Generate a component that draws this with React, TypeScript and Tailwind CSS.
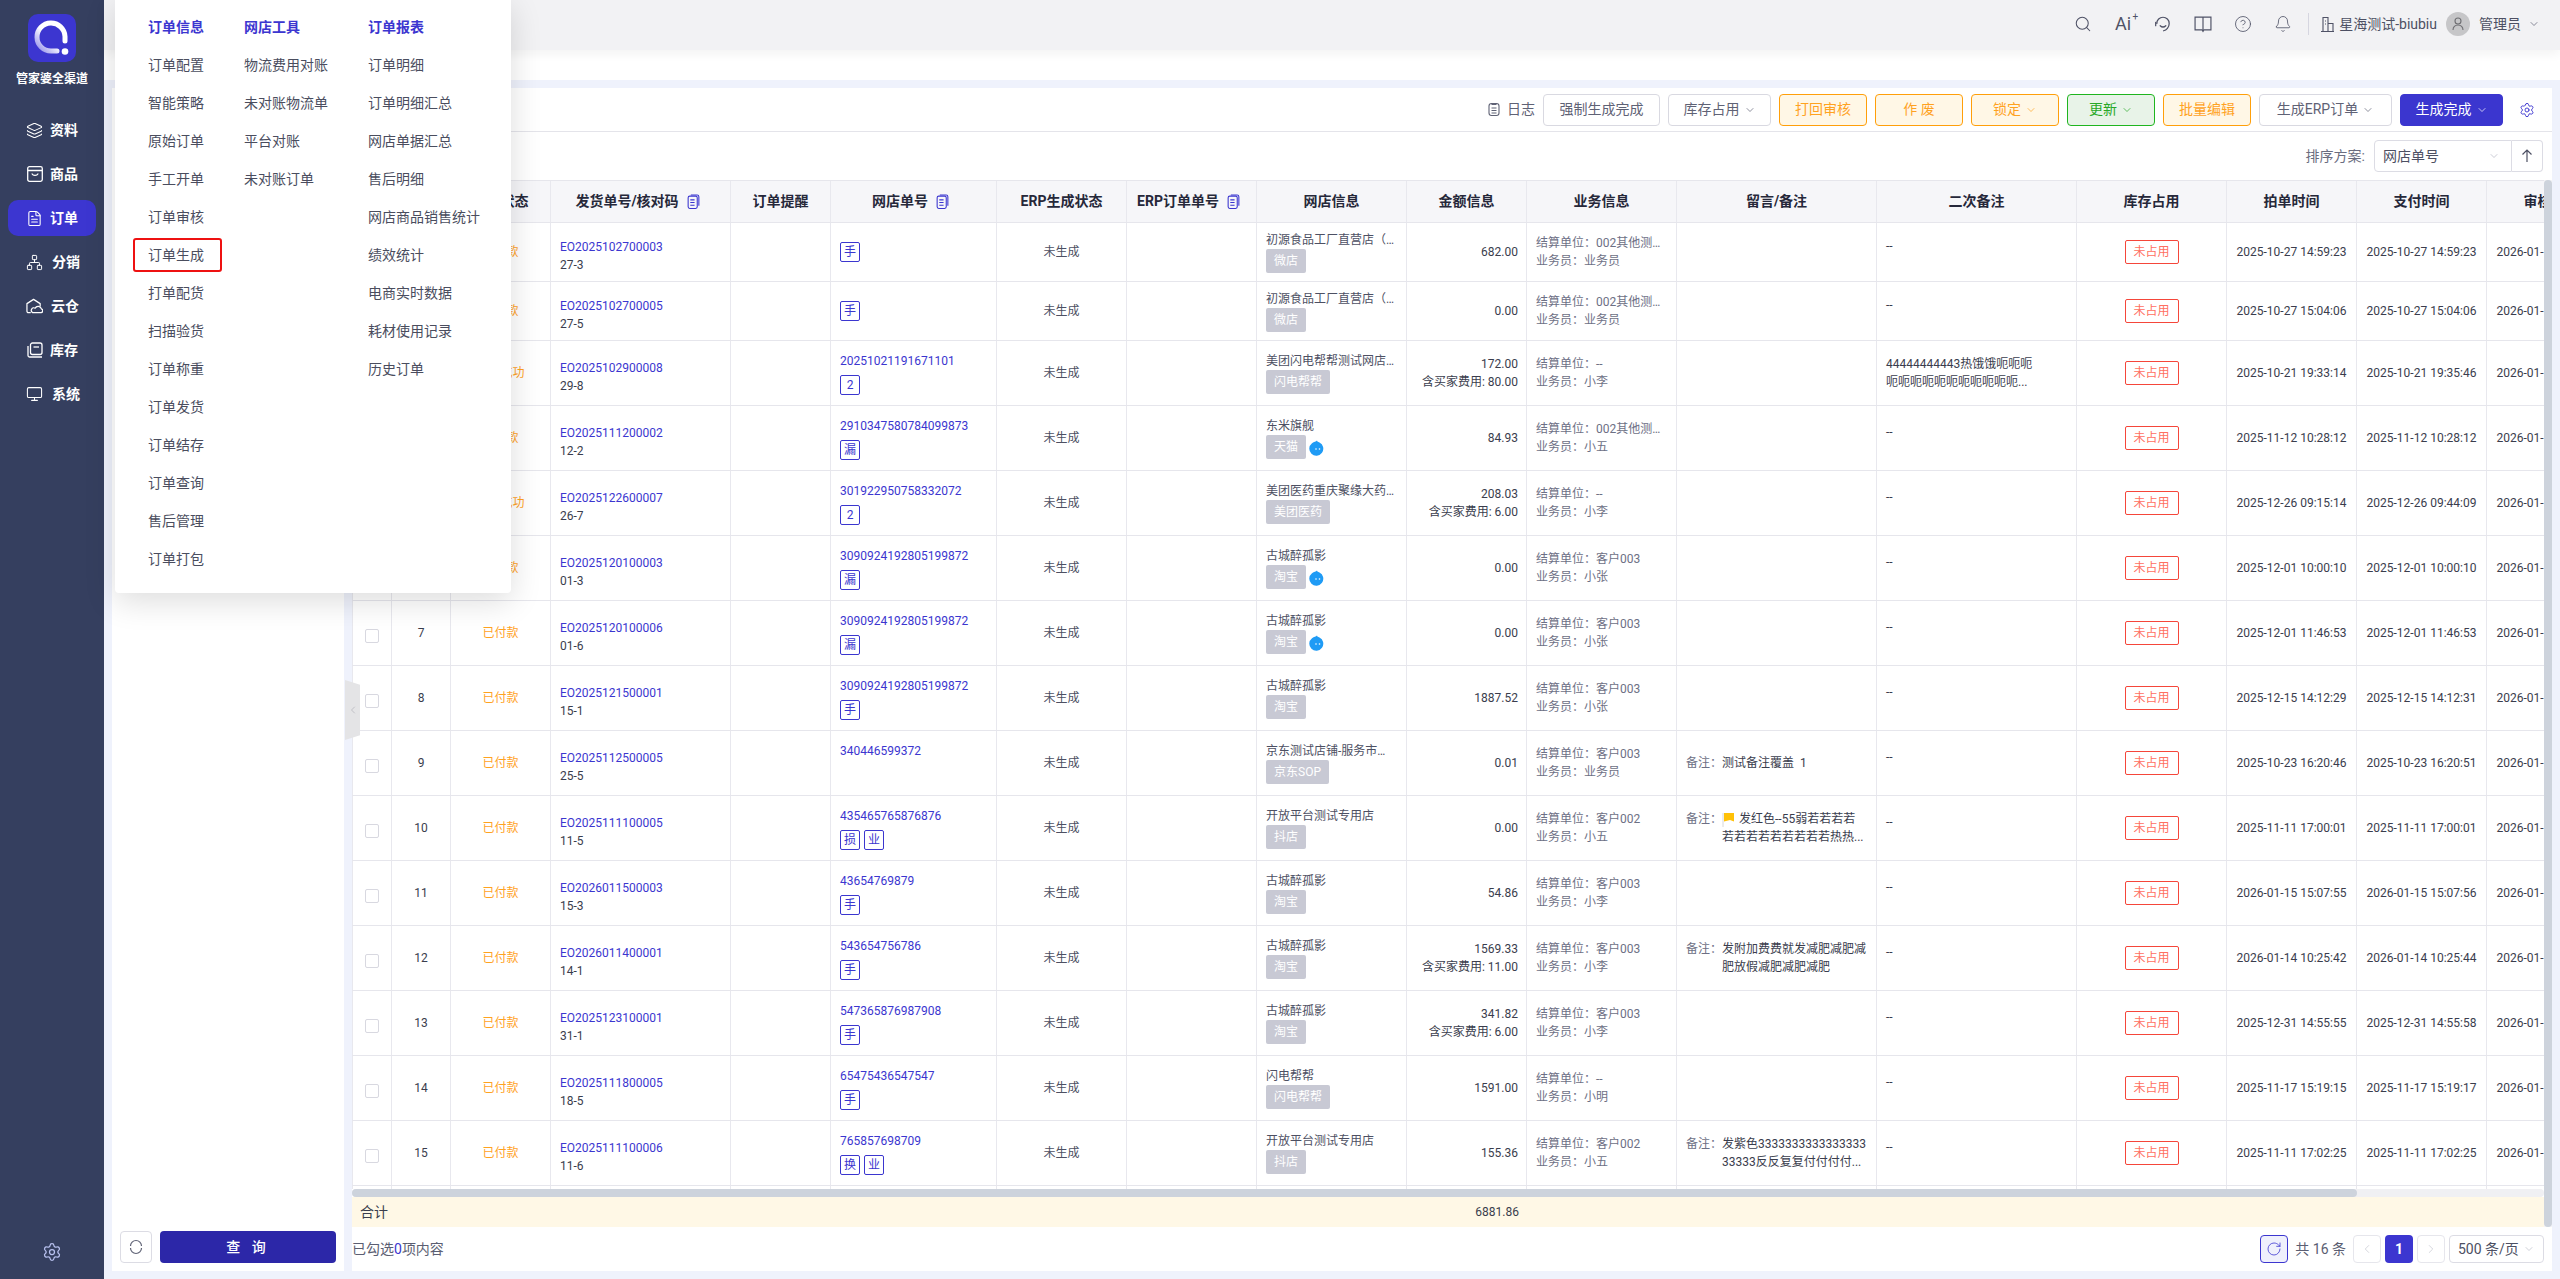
import { Bell, ChevronDown, ChevronLeft, ChevronRight, CircleHelp, FileText, Layers, Monitor, Network, RotateCw, Search, Settings } from 'lucide-react';

const GRID = 'grid grid-cols-[40px_59px_100px_180px_100px_166px_130px_130px_150px_120px_150px_200px_200px_150px_130px_130px_130px] w-[2265px]';

type Order = {
  no: string;
  code: string;
  status?: string;
  shopNo?: string;
  tags: string[];
  shop: string;
  platform: string;
  badge?: boolean;
  amount: string;
  fee?: string;
  unit: string;
  clerk: string;
  remark?: string[];
  flag?: boolean;
  second?: string[];
  created: string;
  paid: string;
};

const orders: Order[] = [
  { no: 'EO2025102700003', code: '27-3', tags: ['手'], shop: '初源食品工厂直营店（旗舰店）', platform: '微店', amount: '682.00', unit: '002其他测试单位', clerk: '业务员', created: '2025-10-27 14:59:23', paid: '2025-10-27 14:59:23' },
  { no: 'EO2025102700005', code: '27-5', tags: ['手'], shop: '初源食品工厂直营店（旗舰店）', platform: '微店', amount: '0.00', unit: '002其他测试单位', clerk: '业务员', created: '2025-10-27 15:04:06', paid: '2025-10-27 15:04:06' },
  { no: 'EO2025102900008', code: '29-8', status: '付款成功', shopNo: '20251021191671101', tags: ['2'], shop: '美团闪电帮帮测试网店铺名', platform: '闪电帮帮', amount: '172.00', fee: '含买家费用: 80.00', unit: '--', clerk: '小李', second: ['44444444443热饿饿呃呃呃', '呃呃呃呃呃呃呃呃呃呃呃...'], created: '2025-10-21 19:33:14', paid: '2025-10-21 19:35:46' },
  { no: 'EO2025111200002', code: '12-2', shopNo: '2910347580784099873', tags: ['漏'], shop: '东米旗舰', platform: '天猫', badge: true, amount: '84.93', unit: '002其他测试单位', clerk: '小五', created: '2025-11-12 10:28:12', paid: '2025-11-12 10:28:12' },
  { no: 'EO2025122600007', code: '26-7', status: '付款成功', shopNo: '301922950758332072', tags: ['2'], shop: '美团医药重庆聚缘大药房店', platform: '美团医药', amount: '208.03', fee: '含买家费用: 6.00', unit: '--', clerk: '小李', created: '2025-12-26 09:15:14', paid: '2025-12-26 09:44:09' },
  { no: 'EO2025120100003', code: '01-3', shopNo: '3090924192805199872', tags: ['漏'], shop: '古城醉孤影', platform: '淘宝', badge: true, amount: '0.00', unit: '客户003', clerk: '小张', created: '2025-12-01 10:00:10', paid: '2025-12-01 10:00:10' },
  { no: 'EO2025120100006', code: '01-6', shopNo: '3090924192805199872', tags: ['漏'], shop: '古城醉孤影', platform: '淘宝', badge: true, amount: '0.00', unit: '客户003', clerk: '小张', created: '2025-12-01 11:46:53', paid: '2025-12-01 11:46:53' },
  { no: 'EO2025121500001', code: '15-1', shopNo: '3090924192805199872', tags: ['手'], shop: '古城醉孤影', platform: '淘宝', amount: '1887.52', unit: '客户003', clerk: '小张', created: '2025-12-15 14:12:29', paid: '2025-12-15 14:12:31' },
  { no: 'EO2025112500005', code: '25-5', shopNo: '340446599372', tags: [], shop: '京东测试店铺-服务市场测试', platform: '京东SOP', amount: '0.01', unit: '客户003', clerk: '业务员', remark: ['测试备注覆盖  1'], created: '2025-10-23 16:20:46', paid: '2025-10-23 16:20:51' },
  { no: 'EO2025111100005', code: '11-5', shopNo: '435465765876876', tags: ['损', '业'], shop: '开放平台测试专用店', platform: '抖店', amount: '0.00', unit: '客户002', clerk: '小五', remark: ['发红色--55弱若若若若', '若若若若若若若若若热热...'], flag: true, created: '2025-11-11 17:00:01', paid: '2025-11-11 17:00:01' },
  { no: 'EO2026011500003', code: '15-3', shopNo: '43654769879', tags: ['手'], shop: '古城醉孤影', platform: '淘宝', amount: '54.86', unit: '客户003', clerk: '小李', created: '2026-01-15 15:07:55', paid: '2026-01-15 15:07:56' },
  { no: 'EO2026011400001', code: '14-1', shopNo: '543654756786', tags: ['手'], shop: '古城醉孤影', platform: '淘宝', amount: '1569.33', fee: '含买家费用: 11.00', unit: '客户003', clerk: '小李', remark: ['发附加费费就发减肥减肥减', '肥放假减肥减肥减肥'], created: '2026-01-14 10:25:42', paid: '2026-01-14 10:25:44' },
  { no: 'EO2025123100001', code: '31-1', shopNo: '547365876987908', tags: ['手'], shop: '古城醉孤影', platform: '淘宝', amount: '341.82', fee: '含买家费用: 6.00', unit: '客户003', clerk: '小李', created: '2025-12-31 14:55:55', paid: '2025-12-31 14:55:58' },
  { no: 'EO2025111800005', code: '18-5', shopNo: '65475436547547', tags: ['手'], shop: '闪电帮帮', platform: '闪电帮帮', amount: '1591.00', unit: '--', clerk: '小明', created: '2025-11-17 15:19:15', paid: '2025-11-17 15:19:17' },
  { no: 'EO2025111100006', code: '11-6', shopNo: '765857698709', tags: ['换', '业'], shop: '开放平台测试专用店', platform: '抖店', amount: '155.36', unit: '客户002', clerk: '小五', remark: ['发紫色3333333333333333', '33333反反复复付付付付...'], created: '2025-11-11 17:02:25', paid: '2025-11-11 17:02:25' },
];

const menuColumns = [
  { title: '订单信息', width: 'w-[96px]', items: ['订单配置', '智能策略', '原始订单', '手工开单', '订单审核', '订单生成', '打单配货', '扫描验货', '订单称重', '订单发货', '订单结存', '订单查询', '售后管理', '订单打包'] },
  { title: '网店工具', width: 'w-[124px]', items: ['物流费用对账', '未对账物流单', '平台对账', '未对账订单'] },
  { title: '订单报表', width: 'w-[130px]', items: ['订单明细', '订单明细汇总', '网店单据汇总', '售后明细', '网店商品销售统计', '绩效统计', '电商实时数据', '耗材使用记录', '历史订单'] },
];

const tools = [
  { label: '强制生成完成', width: 'w-[117px]', tone: 'plain' },
  { label: '库存占用', width: 'w-[103px]', tone: 'plain', arrow: true },
  { label: '打回审核', width: 'w-[88px]', tone: 'amber' },
  { label: '作 废', width: 'w-[88px]', tone: 'amber' },
  { label: '锁定', width: 'w-[88px]', tone: 'amber', arrow: true },
  { label: '更新', width: 'w-[88px]', tone: 'green', arrow: true },
  { label: '批量编辑', width: 'w-[88px]', tone: 'amber' },
  { label: '生成ERP订单', width: 'w-[133px]', tone: 'plain', arrow: true },
  { label: '生成完成', width: 'w-[103px]', tone: 'primary', arrow: true },
];

const toneClass: Record<string, string> = {
  plain: 'border-[#d9d9e1] bg-white text-[#5f6275]',
  amber: 'border-[#ff9f0a] bg-[#fff7e6] text-[#ffa21f]',
  green: 'border-[#1fb51f] bg-[#e8f3e8] text-[#27a827]',
  primary: 'border-[#3b36cf] bg-[#3b36cf] text-white',
};

function CopyIcon() {
  return (
    <svg width="13" height="15" viewBox="0 0 12 14" fill="none" stroke="#3b36cf" strokeWidth="1" className="ml-2 shrink-0">
      <rect x="1" y="2" width="8.5" height="11.5" rx="1.5" />
      <path d="M3.5 1h6A1.5 1.5 0 0 1 11 2.500V11M3 5.500h4M3 8h4M3 10.500h4" />
    </svg>
  );
}

function StoreIcon() {
  return (
    <svg width="16" height="16" viewBox="0 0 16 16" fill="none" stroke="currentColor" strokeWidth="1.3">
      <rect x="0.700" y="0.700" width="14.600" height="14.600" rx="1.800" />
      <path d="M1 4.500h14M5 7.500c.5 2.600 5.500 2.600 6 0" />
    </svg>
  );
}

function CloudHouseIcon() {
  return (
    <svg width="18" height="16" viewBox="0 0 18 16" fill="none" stroke="currentColor" strokeWidth="1.3" strokeLinejoin="round">
      <path d="M5 15H2.500A1.500 1.500 0 0 1 1 13.500V5.500L8 1l7 4.500v3" />
      <path d="M7 15h9a2 2 0 0 0 .3-3.900 3.500 3.500 0 0 0-6.600-.8A2.400 2.400 0 0 0 7 15z" />
    </svg>
  );
}

function StockIcon() {
  return (
    <svg width="16" height="16" viewBox="0 0 16 16" fill="none" stroke="currentColor" strokeWidth="1.3">
      <path d="M1 4v9.500A1.500 1.500 0 0 0 2.500 15H15" />
      <rect x="3.500" y="1" width="11.500" height="11.500" rx="2" />
      <path d="M6.500 5h5.500" />
    </svg>
  );
}

const navItems = [
  { label: '资料', icon: <Layers size={17} strokeWidth={1.5} />, labelClass: '' },
  { label: '商品', icon: <StoreIcon />, labelClass: '' },
  { label: '订单', icon: <FileText size={17} strokeWidth={1.5} />, labelClass: '', active: true },
  { label: '分销', icon: <Network size={19} strokeWidth={1.4} />, labelClass: 'ml-[2px]' },
  { label: '云仓', icon: <CloudHouseIcon />, labelClass: 'ml-px' },
  { label: '库存', icon: <StockIcon />, labelClass: '' },
  { label: '系统', icon: <Monitor size={18} strokeWidth={1.5} />, labelClass: 'ml-[2px]' },
];

function Sidebar() {
  return (
    <aside className="flex h-full w-[104px] shrink-0 flex-col items-center bg-[#353f5f] pt-[14px]">
      <div className="flex h-12 w-12 items-center justify-center rounded-[10px] bg-[#3c36d0]">
        <svg width="48" height="48" viewBox="0 0 48 48" fill="none">
          <defs>
            <linearGradient id="logoArc" x1="8" y1="36" x2="30" y2="14" gradientUnits="userSpaceOnUse">
              <stop stopColor="#8f8bea" />
              <stop offset="0.6" stopColor="#ffffff" />
            </linearGradient>
          </defs>
          <path d="M37 27v-4.500a14 14 0 1 0-14 14.500h6" stroke="url(#logoArc)" strokeWidth="5" strokeLinecap="round" />
          <circle cx="37" cy="37.500" r="3.300" fill="#fff" />
        </svg>
      </div>
      <div className="mt-2 text-[12px] leading-[18px] font-bold text-white">管家婆全渠道</div>
      <nav className="mt-6 flex w-full flex-col gap-2 px-2">
        {navItems.map((item) => (
          <div
            key={item.label}
            className={`flex h-9 items-center gap-[7px] rounded-[10px] pl-[18px] text-[14px] font-bold text-white ${item.active ? 'bg-[#3c36d0]' : ''}`}
          >
            <span className="flex w-[17px] justify-center">{item.icon}</span>
            <span className={item.labelClass}>{item.label}</span>
          </div>
        ))}
      </nav>
      <Settings size={20} strokeWidth={1.5} className="mt-auto mb-[17px] text-[#b9c2f0]" />
    </aside>
  );
}

function TopIcon({ children }: { children: React.ReactNode }) {
  return <span className="flex w-10 justify-center">{children}</span>;
}

function TopBar() {
  return (
    <header className="relative z-10 flex h-[50px] shrink-0 items-center justify-end bg-[#f2f2f4] pr-[20px] pb-[2px] text-[#4f5266] shadow-[0_4px_10px_rgba(0,0,0,0.05)]">
      <TopIcon>
        <Search size={18} strokeWidth={1.4} />
      </TopIcon>
      <TopIcon>
        <span className="relative text-[18px] leading-none">
          Ai
          <span className="absolute -top-[3px] -right-[7px] text-[10px] leading-none">+</span>
        </span>
      </TopIcon>
      <TopIcon>
        <svg width="18" height="18" viewBox="0 0 16 16" fill="none" stroke="currentColor" strokeWidth="1.1" strokeLinecap="round">
          <path d="M2.500 7.500a5.500 5.500 0 0 1 11 0c0 3.500-2.500 6-5 6.500" />
          <path d="M1.500 6.500v3M5.500 9.500c1.500 1.500 3.500 1.500 5 0" />
        </svg>
      </TopIcon>
      <TopIcon>
        <svg width="18" height="17" viewBox="0 0 17 16" fill="none" stroke="currentColor" strokeWidth="1.1">
          <path d="M1 1h15v12H9.500l-1 1.500-1-1.500H1zM8.500 1v12" />
        </svg>
      </TopIcon>
      <TopIcon>
        <CircleHelp size={18} strokeWidth={1.1} />
      </TopIcon>
      <TopIcon>
        <Bell size={18} strokeWidth={1.1} />
      </TopIcon>
      <span className="mr-[11px] ml-[5px] h-[22px] w-px bg-[#d6d6e0]" />
      <svg width="14" height="17" viewBox="0 0 14 16" fill="none" stroke="currentColor" strokeWidth="1.1" className="mr-[5px]">
        <path d="M3 15V1h5v14M8 7h5v8M1 15h13M5 4.500h1M5 7.500h1" />
      </svg>
      <span className="text-[14px] text-[#4d5063]">星海测试-biubiu</span>
      <span className="mx-[9px] flex h-6 w-6 items-center justify-center rounded-full bg-[#c6c6c8]">
        <svg width="12" height="14" viewBox="0 0 12 14" fill="none" stroke="#6e6e72" strokeWidth="1.1">
          <circle cx="6" cy="4" r="3" />
          <path d="M1 13c0-3 2-5 5-5s5 2 5 5" />
        </svg>
      </span>
      <span className="text-[14px] text-[#4d5063]">管理员</span>
      <ChevronDown size={12} strokeWidth={1.3} className="ml-[7px]" />
    </header>
  );
}

function MegaMenu() {
  return (
    <div className="absolute top-0 left-[115px] z-20 flex h-[593px] w-[396px] rounded-b-[4px] bg-white pt-2 pl-[33px] shadow-[0_8px_32px_rgba(0,0,0,0.14)]">
      {menuColumns.map((col) => (
        <div key={col.title} className={col.width}>
          <div className="h-[38px] text-[14px] leading-[38px] font-bold text-[#3c36d0]">{col.title}</div>
          {col.items.map((item) => (
            <div key={item} className="relative h-[38px] whitespace-nowrap text-[14px] leading-[38px] text-[#4a4d5e]">
              {item}
              {item === '订单生成' && (
                <span className="absolute top-[2px] -left-[15px] h-[34px] w-[89px] rounded-[3px] border-2 border-[#ee1111]" />
              )}
            </div>
          ))}
        </div>
      ))}
    </div>
  );
}

function Toolbar() {
  return (
    <div className="flex h-[44px] shrink-0 items-center justify-end border-b border-[#e4e4ea] pr-[17px] text-[14px]">
      <svg width="12" height="15" viewBox="0 0 12 15" fill="none" stroke="#5f6275" strokeWidth="1.100" className="mr-[7px]">
        <rect x="1" y="1.500" width="10" height="12" rx="2.500" />
        <path d="M4 1v1.500h4V1M3.500 6h5M3.500 8.500h5M3.500 11h5" />
      </svg>
      <span className="mr-2 text-[#5f6275]">日志</span>
      <div className="flex gap-2">
        {tools.map((tool) => (
          <div
            key={tool.label}
            className={`flex h-8 items-center justify-center gap-1 rounded-[4px] border ${tool.width} ${toneClass[tool.tone]}`}
          >
            {tool.label}
            {tool.arrow && <ChevronDown size={12} strokeWidth={1.4} />}
          </div>
        ))}
      </div>
      <Settings size={16} strokeWidth={1.4} className="ml-4 text-[#3c36d0]" />
    </div>
  );
}

function SortRow() {
  return (
    <div className="flex h-[48px] shrink-0 justify-end pt-2 pr-[9px] text-[14px]">
      <span className="mr-[9px] leading-[32px] text-[#6a6d80]">排序方案:</span>
      <div className="flex h-8 w-[138px] items-center justify-between rounded-l-[4px] border border-[#dcdce4] pr-[11px] pl-2 text-[#4d5063]">
        网店单号
        <ChevronDown size={12} strokeWidth={1.3} className="text-[#b0b2bf]" />
      </div>
      <div className="flex h-8 w-[31px] items-center justify-center rounded-r-[4px] border border-l-0 border-[#dcdce4] text-[#4d5063]">
        <svg width="12" height="14" viewBox="0 0 12 14" fill="none" stroke="currentColor" strokeWidth="1.200">
          <path d="M6 13V1M1.500 5.500 6 1l4.500 4.500" />
        </svg>
      </div>
    </div>
  );
}

function HeadCell({ label, copy, className }: { label?: string; copy?: boolean; className?: string }) {
  return (
    <div className={`flex items-center justify-center border-r border-[#e8e8ee] text-[14px] font-bold whitespace-nowrap text-[#26283a] ${copy ? 'pr-[6px]' : ''} ${className ?? ''}`}>
      {label}
      {copy && <CopyIcon />}
    </div>
  );
}

function TableHead() {
  return (
    <div className={`${GRID} h-[43px] border-y border-[#e6e6ec] bg-[#f6f6f9]`}>
      <HeadCell className="border-l" />
      <HeadCell />
      <HeadCell label="订单状态" />
      <HeadCell label="发货单号/核对码" copy />
      <HeadCell label="订单提醒" />
      <HeadCell label="网店单号" copy />
      <HeadCell label="ERP生成状态" />
      <HeadCell label="ERP订单单号" copy />
      <HeadCell label="网店信息" />
      <HeadCell label="金额信息" />
      <HeadCell label="业务信息" />
      <HeadCell label="留言/备注" />
      <HeadCell label="二次备注" />
      <HeadCell label="库存占用" />
      <HeadCell label="拍单时间" />
      <HeadCell label="支付时间" />
      <HeadCell label="审核时间" />
    </div>
  );
}

function ShopTag({ text }: { text: string }) {
  return (
    <span className="flex h-5 w-5 items-center justify-center rounded-[2px] border border-[#3b36cf] text-[12px] text-[#3b36cf]">
      {text}
    </span>
  );
}

function DropBadge() {
  return (
    <svg width="16" height="16" viewBox="0 0 16 16" className="mb-[3px] ml-[3px] shrink-0">
      <path d="M8 0.500c.3 1 1 1.500 2.500 2A7 7 0 1 1 3 3.200C5 1.700 7 2 8 .500z" fill="#1f9bf5" />
      <circle cx="7" cy="9" r="0.800" fill="#fff" />
      <circle cx="10.500" cy="9" r="0.800" fill="#fff" />
    </svg>
  );
}

const cell = 'flex min-w-0 border-r border-[#e8e8ee] text-[12px] leading-[18px]';

function OrderRow({ order, index, short }: { order: Order; index: number; short: boolean }) {
  return (
    <div className={`${GRID} border-b border-[#e6e6ec] ${short ? 'h-[59px]' : 'h-[65px]'}`}>
      <div className={`${cell} items-center justify-center border-l pt-[5px]`}>
        <span className="h-[14px] w-[14px] rounded-[2px] border border-[#d8d8e0] bg-white" />
      </div>
      <div className={`${cell} items-center justify-center text-[#3a3d4d]`}>{index + 1}</div>
      <div className={`${cell} items-center justify-center text-[#ffa21f]`}>{order.status ?? '已付款'}</div>
      <div className={`${cell} flex-col justify-center pt-[7px] pl-[9px]`}>
        <div className="text-[#3b36cf]">{order.no}</div>
        <div className="text-[#3a3d4d]">{order.code}</div>
      </div>
      <div className={cell} />
      <div className={`${cell} flex-col justify-center pl-[9px] ${order.shopNo ? 'gap-[5px] pt-px' : ''}`}>
        {order.shopNo && <div className="text-[#3b36cf]">{order.shopNo}</div>}
        <div className="flex h-5 gap-1">
          {order.tags.map((tag) => (
            <ShopTag key={tag} text={tag} />
          ))}
        </div>
      </div>
      <div className={`${cell} items-center justify-center text-[#4d5063]`}>未生成</div>
      <div className={cell} />
      <div className={`${cell} flex-col justify-center px-[9px]`}>
        <div className="truncate text-[#4d5063]">{order.shop}</div>
        <div className="flex items-end">
          <span className="h-6 rounded-[2px] bg-[#c8c9d4] px-2 leading-6 text-white">{order.platform}</span>
          {order.badge && <DropBadge />}
        </div>
      </div>
      <div className={`${cell} flex-col items-end justify-center pr-2 leading-[14px] text-[#3a3d4d]`}>
        <div>{order.amount}</div>
        {order.fee && <div>{order.fee}</div>}
      </div>
      <div className={`${cell} flex-col justify-center px-[9px] text-[#6d7085]`}>
        <div className="truncate">结算单位：{order.unit}</div>
        <div className="truncate">业务员：{order.clerk}</div>
      </div>
      <div className={`${cell} items-center pl-[9px]`}>
        {order.remark && (
          <div className="flex min-w-0">
            <span className="shrink-0 text-[#6d7085]">备注：</span>
            <div className="whitespace-pre text-[#3a3d4d]">
              {order.remark.map((line, i) => (
                <div key={line} className="flex items-center">
                  {order.flag && i === 0 && (
                    <svg width="14" height="15" viewBox="0 0 14 15" className="mr-[3px]">
                      <path d="M1 1v14" stroke="#d8d8d8" strokeWidth="1" />
                      <path d="M2 1h10v8.500L8 8 2 9.500z" fill="#ffc107" />
                    </svg>
                  )}
                  {line}
                </div>
              ))}
            </div>
          </div>
        )}
      </div>
      <div className={`${cell} flex-col justify-center pl-[9px] text-[#3a3d4d]`}>
        {order.second ? order.second.map((line) => <div key={line}>{line}</div>) : <div className="pb-[13px]">--</div>}
      </div>
      <div className={`${cell} items-center justify-center`}>
        <span className="h-6 w-[54px] rounded-[2px] border border-[#f5463a] text-center leading-[22px] text-[#ff6f61]">未占用</span>
      </div>
      <div className={`${cell} items-center justify-center text-[#3a3d4d]`}>{order.created}</div>
      <div className={`${cell} items-center justify-center text-[#3a3d4d]`}>{order.paid}</div>
      <div className={`${cell} items-center justify-center text-[#3a3d4d]`}>2026-01-16 09:30:12</div>
    </div>
  );
}

function TablePanel() {
  return (
    <div className="flex min-h-0 flex-1">
      <div className="flex min-w-0 flex-1 flex-col">
        <div className="min-h-0 flex-1 overflow-hidden">
          <TableHead />
          {orders.map((order, i) => (
            <OrderRow key={order.no} order={order} index={i} short={i < 2} />
          ))}
          <div className={`${GRID} h-[4px]`}>
            {Array.from({ length: 17 }).map((_, i) => (
              <div key={i} className={`border-r border-[#e8e8ee] ${i === 0 ? 'border-l' : ''}`} />
            ))}
          </div>
        </div>
        <div className="h-2 shrink-0 rounded-[4px] bg-[#f0f0f3]">
          <div className="h-2 w-[2005px] rounded-[4px] bg-[#cdd3dc]" />
        </div>
        <div className={`${GRID} h-[30px] shrink-0 !w-full bg-[#fff8e6] text-[14px] leading-[30px] text-[#3a3d4d]`}>
          <div className="pl-2 whitespace-nowrap">合计</div>
          <div className="col-start-10 pr-2 text-right text-[12px]">6881.86</div>
        </div>
      </div>
      <div className="w-2 shrink-0 bg-[#f4f4f6]">
        <div className="h-[1047px] w-2 rounded-[4px] bg-[#cdd3dc]" />
      </div>
    </div>
  );
}

function Footer() {
  return (
    <div className="flex h-[44px] shrink-0 items-center justify-between pr-2 text-[14px] text-[#5b5e72]">
      <div>
        已勾选<span className="text-[#3b36cf]">0</span>项内容
      </div>
      <div className="flex items-center">
        <span className="flex h-7 w-7 items-center justify-center rounded-[4px] border border-[#3c36d0] bg-[#eff0fc] text-[#3c36d0]">
          <RotateCw size={16} strokeWidth={1.2} />
        </span>
        <span className="mx-[7px]">共 16 条</span>
        <span className="flex h-7 w-7 items-center justify-center rounded-[4px] border border-[#e6e6ec] text-[#c4c5d0]">
          <ChevronLeft size={14} strokeWidth={1.2} />
        </span>
        <span className="mx-1 flex h-7 w-7 items-center justify-center rounded-[4px] bg-[#3c36d0] font-bold text-white">1</span>
        <span className="flex h-7 w-7 items-center justify-center rounded-[4px] border border-[#e6e6ec] text-[#c4c5d0]">
          <ChevronRight size={14} strokeWidth={1.2} />
        </span>
        <span className="ml-1 flex h-7 w-[95px] items-center justify-between rounded-[4px] border border-[#dcdce4] px-2 text-[#4d5063]">
          500 条/页
          <ChevronDown size={12} strokeWidth={1.2} className="text-[#b0b2bf]" />
        </span>
      </div>
    </div>
  );
}

export default function App() {
  return (
    <div className="relative flex h-[1279px] w-[2560px] overflow-hidden bg-[#eff2fc] font-[Roboto,'Noto_Sans_CJK_SC',sans-serif]">
      <Sidebar />
      <div className="flex min-w-0 flex-1 flex-col">
        <TopBar />
        <div className="h-[30px] shrink-0 bg-white" />
        <div className="flex min-h-0 flex-1 gap-2 p-2">
          <div className="flex w-[232px] shrink-0 flex-col justify-end bg-white p-2">
            <div className="flex gap-2">
              <span className="flex h-8 w-8 items-center justify-center rounded-[4px] border border-[#dcdce4] text-[#5f6275]">
                <svg width="14" height="16" viewBox="0 0 14 16" fill="none" stroke="currentColor" strokeWidth="1.2">
                  <path d="M1.500 7a5.500 5.500 0 0 1 11 0M12.500 9a5.500 5.500 0 0 1-11 0" />
                </svg>
              </span>
              <span className="flex h-8 flex-1 items-center justify-center rounded-[4px] bg-[#2c27a8] text-[14px] font-medium tracking-[4px] text-white">
                查 询
              </span>
            </div>
          </div>
          <div className="flex min-w-0 flex-1 flex-col bg-white">
            <Toolbar />
            <SortRow />
            <TablePanel />
            <Footer />
          </div>
        </div>
      </div>
      <MegaMenu />
      <div className="absolute top-[680px] left-[345px] flex h-[60px] w-[15px] items-center justify-center bg-[#e4e4e6] text-[#a8a8b0] [clip-path:polygon(0_0,100%_8%,100%_92%,0_100%)]">
        <ChevronLeft size={12} strokeWidth={1.2} />
      </div>
    </div>
  );
}
